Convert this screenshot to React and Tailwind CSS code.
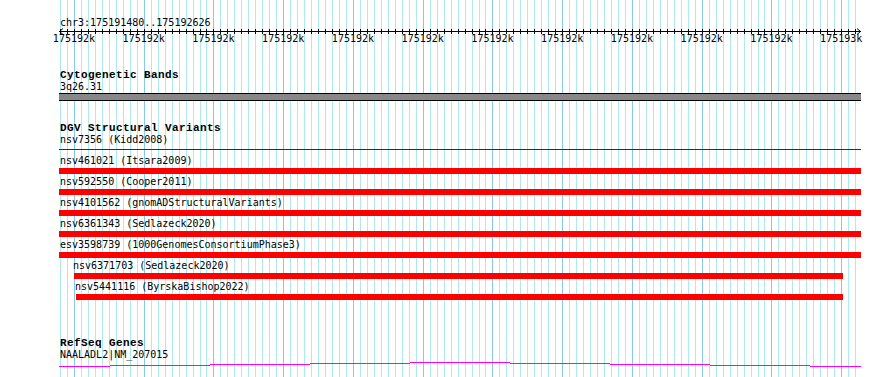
import React from "react";

const STEP = 6.975;
const GRID_COUNT = 115;

const rulerLabels = Array.from({ length: 12 }, (_, m) => ({
  x: 73.95 + 69.75 * m,
  text: m === 11 ? "175193k" : "175192k",
}));

const variants = [
  { label: "nsv7356 (Kidd2008)", kind: "line", textCls: "pl-px", barCls: "w-[802px]" },
  { label: "nsv461021 (Itsara2009)", kind: "bar", textCls: "pl-px", barCls: "w-[802px]" },
  { label: "nsv592550 (Cooper2011)", kind: "bar", textCls: "pl-px", barCls: "w-[802px]" },
  { label: "nsv4101562 (gnomADStructuralVariants)", kind: "bar", textCls: "pl-px", barCls: "w-[802px]" },
  { label: "nsv6361343 (Sedlazeck2020)", kind: "bar", textCls: "pl-px", barCls: "w-[802px]" },
  { label: "esv3598739 (1000GenomesConsortiumPhase3)", kind: "bar", textCls: "pl-px", barCls: "w-[802px]" },
  { label: "nsv6371703 (Sedlazeck2020)", kind: "bar", textCls: "pl-[14px]", barCls: "ml-[15px] w-[769px]" },
  { label: "nsv5441116 (ByrskaBishop2022)", kind: "bar", textCls: "pl-[16px]", barCls: "ml-[17px] w-[767px]" },
];

// gene outline steps: [x1, x2, y]
const geneSteps = [
  [59, 110, 366],
  [110, 210, 365],
  [210, 310, 364],
  [310, 410, 363],
  [410, 510, 362],
  [510, 610, 363],
  [610, 710, 364],
  [710, 810, 365],
  [810, 861, 366],
];

const mono = "font-['DejaVu_Sans_Mono',monospace] text-[10px] text-black whitespace-nowrap";
const title = "font-['Liberation_Mono',monospace] text-[11px] font-bold tracking-[0.4px] text-black whitespace-nowrap";

const Grid = () => {
  const lines = [];
  for (let k = 0; k < GRID_COUNT; k++) {
    const x = Math.round(60 + STEP * k) + 0.5;
    const major = (k - 2) % 10 === 0;
    lines.push(
      <line key={k} x1={x} x2={x} y1={0} y2={377} stroke={major ? "#87c8f0" : "#ade9ee"} strokeWidth={1} />
    );
  }
  return (
    <svg className="absolute inset-0 pointer-events-none" width="890" height="377">
      {lines}
    </svg>
  );
};

const Ruler = () => {
  const ticks = [];
  for (let k = 0; k < GRID_COUNT; k++) {
    const x = Math.round(60 + STEP * k) + 0.5 - 59;
    ticks.push(<line key={k} x1={x} x2={x} y1={0} y2={5} stroke="#000" strokeWidth={1} />);
  }
  return (
    <div className="ml-[59px] w-[802px]">
      <svg className="block overflow-visible" width="802" height="5">
        <line x1={0} x2={802} y1={2.5} y2={2.5} stroke="#000" strokeWidth={1} />
        {ticks}
        <polyline points="4,-0.5 0.5,2.5 4,5.5" fill="none" stroke="#000" strokeWidth={1} />
        <polyline points="798,-0.5 801.5,2.5 798,5.5" fill="none" stroke="#000" strokeWidth={1} />
      </svg>
      <div className="relative h-[12px]">
        {rulerLabels.map((l, i) => (
          <span
            key={i}
            className={`absolute -top-px -translate-x-1/2 leading-[12px] ${mono}`}
            style={{ left: l.x - 59 }}
          >
            {l.text}
          </span>
        ))}
      </div>
    </div>
  );
};

const VariantRow = ({ v }) => (
  <div className="h-[21px] flex flex-col">
    <div className={`h-[12px] leading-[11px] ${mono} ${v.textCls}`}>{v.label}</div>
    <div className={`mt-px h-[6px] ${v.barCls}`}>
      {v.kind === "line" ? (
        <div className="mt-[2px] h-px bg-[#3b1a78]" />
      ) : (
        <div className="h-[6px] bg-[#ff0000]" />
      )}
    </div>
  </div>
);

export default function App() {
  return (
    <div className="relative w-[890px] h-[377px] overflow-hidden bg-white">
      <Grid />
      <div className="relative flex flex-col">
        {/* location + ruler */}
        <div className={`mt-[17px] ml-[60px] h-[12px] leading-[11px] ${mono}`}>chr3:175191480..175192626</div>
        <Ruler />

        {/* cytobands */}
        <div className="mt-[23px] ml-[59px] w-[802px]">
          <div className={`h-[12px] leading-[12px] pl-px ${title}`}>Cytogenetic Bands</div>
          <div className={`h-[12px] leading-[11px] pl-px ${mono}`}>3q26.31</div>
          <div className="h-[8px] border-y border-black bg-[#888888]" />
        </div>

        {/* DGV */}
        <div className="mt-[21px] ml-[59px] w-[802px]">
          <div className={`h-[12px] leading-[12px] pl-px ${title}`}>DGV Structural Variants</div>
          {variants.map((v, i) => (
            <VariantRow key={i} v={v} />
          ))}
        </div>

        {/* RefSeq */}
        <div className="mt-[36px] ml-[59px] w-[802px]">
          <div className={`h-[11px] leading-[11px] pl-px ${title}`}>RefSeq Genes</div>
          <div className={`h-[12px] leading-[11px] pl-px ${mono}`}>NAALADL2|NM_207015</div>
          <svg className="block" width="802" height="7">
            {geneSteps.map(([x1, x2, y], i) => (
              <rect key={i} x={x1 - 59} y={y - 361} width={x2 - x1} height={1} fill="#ff00ff" />
            ))}
          </svg>
        </div>
      </div>
    </div>
  );
}
